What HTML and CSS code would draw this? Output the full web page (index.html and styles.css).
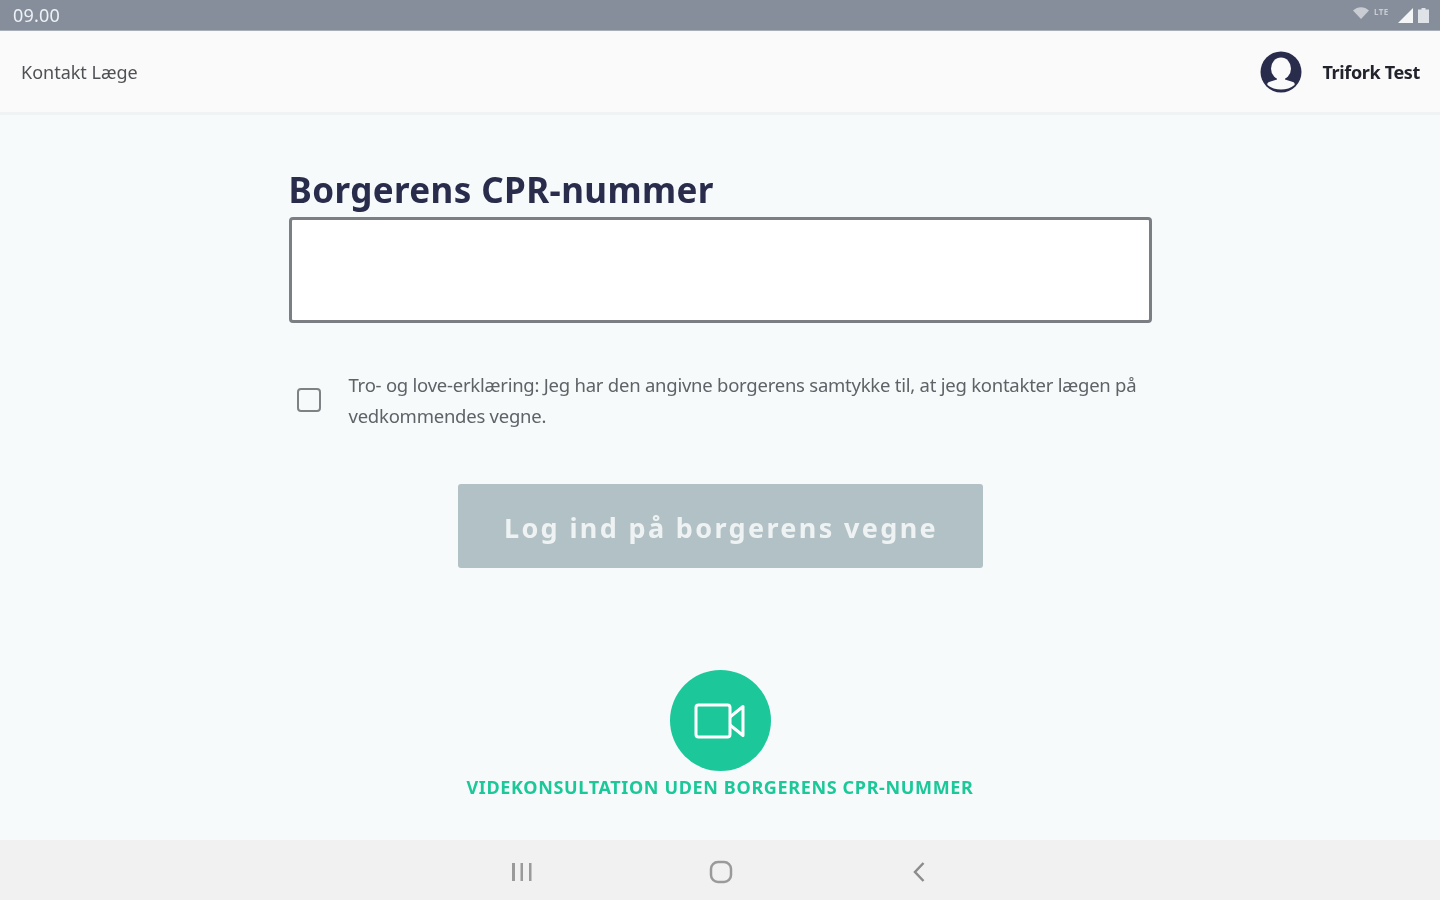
FILE: index.html
```html
<!DOCTYPE html>
<html lang="da">
<head>
<meta charset="utf-8">
<title>Kontakt Læge</title>
<link rel="stylesheet" href="styles.css">
</head>
<body>
<div class="app">
  <div class="statusbar">
    <span class="time">09.00</span>
    <div class="status-icons">
      <svg class="ic-wifi" width="16" height="12" viewBox="0 0 16 12"><path d="M0 3.500C4.500-1 11.500-1 16 3.500L8 12Z" fill="#c9cdd3"/></svg>
      <span class="lte">LTE</span>
      <svg class="ic-signal" width="15" height="15" viewBox="0 0 15 15"><path d="M15 0V15H0Z" fill="#f4f5f6"/></svg>
      <svg class="ic-battery" width="11" height="15" viewBox="0 0 11 15"><path d="M3.500 0h4v1.500H11V15H0V1.500h3.500Z" fill="#dfe2e6"/></svg>
    </div>
  </div>
  <header class="topbar">
    <span class="app-title">Kontakt Læge</span>
    <div class="user">
      <svg class="avatar" width="42" height="42" viewBox="0 0 42 42">
        <circle cx="21" cy="21" r="20.500" fill="#2a2c4c"/>
        <ellipse cx="21" cy="17.500" rx="10" ry="11" fill="#fafafa"/>
        <path d="M17 25h8v3.500l8 2.500c1.500.6 2 2 1.500 3C31 37 26 38.500 21 38.500S11 37 7.500 34c-.5-1 0-2.400 1.500-3l8-2.500Z" fill="#fafafa"/>
      </svg>
      <span class="user-name">Trifork Test</span>
    </div>
  </header>
  <main class="content">
    <section class="form">
      <h1 class="form-title">Borgerens CPR-nummer</h1>
      <input class="cpr-input" type="text" aria-label="Borgerens CPR-nummer">
      <label class="consent">
        <span class="checkbox"></span>
        <span class="consent-text">Tro- og love-erklæring: Jeg har den angivne borgerens samtykke til, at jeg kontakter lægen på vedkommendes vegne.</span>
      </label>
      <button class="login-btn" type="button"><span class="login-label">Log ind på borgerens vegne</span></button>
    </section>
    <div class="video">
      <div class="video-circle">
        <svg width="52" height="36" viewBox="0 0 52 36" fill="none" stroke="#fff" stroke-width="3" stroke-linejoin="round"><rect x="2" y="2" width="34" height="32" rx="2.500"/><path d="M36 14 49 3.500V32.500L36 22"/></svg>
      </div>
      <span class="video-label">VIDEKONSULTATION UDEN BORGERENS CPR-NUMMER</span>
    </div>
  </main>
  <nav class="navbar">
    <svg class="nav-icon" width="22" height="20" viewBox="0 0 22 20" fill="#9a9a9a"><rect x="1" y="1" width="3" height="18"/><rect x="9.500" y="1" width="2.500" height="18"/><rect x="18" y="1" width="2.500" height="18"/></svg>
    <svg class="nav-icon" width="24" height="24" viewBox="0 0 24 24" fill="none" stroke="#9a9a9a" stroke-width="2.500"><rect x="2" y="2" width="20" height="20" rx="7"/></svg>
    <svg class="nav-icon nav-back" width="14" height="22" viewBox="0 0 14 22" fill="none" stroke="#8c8c8c" stroke-width="2.500"><path d="M11.500 2 3 11l8.500 9"/></svg>
  </nav>
</div>
</body>
</html>
```

FILE: styles.css
```css
* { box-sizing: border-box; }
html, body { margin: 0; padding: 0; }
body {
  font-family: "Noto Sans", "Open Sans", sans-serif;
  background: #f6fafb;
}
.app {
  width: 1440px;
  height: 900px;
  display: flex;
  flex-direction: column;
  overflow: hidden;
}
.statusbar {
  height: 31px;
  flex: none;
  background: #868e9b;
  display: flex;
  align-items: center;
  justify-content: space-between;
  padding: 0 11px 0 13px;
  border-bottom: 1px solid #a9afb8;
}
.time {
  color: #eef1f5;
  font-size: 18px;
  letter-spacing: .2px;
  filter: blur(.7px);
}
.status-icons { display: flex; align-items: center; filter: blur(.7px); }
.ic-wifi { margin: 0 5px 5px 0; }
.lte { color: #c9cdd3; font-size: 8px; font-weight: 700; letter-spacing: .4px; width: 24px; margin-bottom: 8px; }
.ic-signal { margin-right: 5px; }
.topbar {
  height: 84px;
  flex: none;
  background: #fafafa;
  border-bottom: 3px solid #f0f3f4;
  display: flex;
  align-items: center;
  justify-content: space-between;
  padding: 0 20px 0 21px;
}
.app-title { color: #4f5155; font-size: 18px; filter: blur(.7px); }
.user { display: flex; align-items: center; gap: 20px; }
.avatar { filter: blur(.7px); }
.user-name { color: #22232c; font-size: 18px; font-weight: 700; letter-spacing: -.35px; filter: blur(.7px); }
.content {
  flex: 1;
  display: flex;
  flex-direction: column;
  align-items: center;
  padding-top: 50px;
}
.form { width: 863px; display: flex; flex-direction: column; }
.form-title {
  margin: 0 0 2px;
  color: #2a2c4c;
  font-size: 35px;
  line-height: 50px;
  font-weight: 700;
  letter-spacing: .4px;
  filter: blur(.7px);
}
.cpr-input {
  height: 106px;
  width: 100%;
  background: #fff;
  border: 3px solid #7b7e82;
  border-radius: 4px;
  outline: none;
  filter: blur(.6px);
}
.consent { display: flex; align-items: center; margin-top: 46px; padding-left: 8px; }
.checkbox {
  flex: none;
  width: 24px;
  height: 24px;
  border: 2.500px solid #7f8285;
  border-radius: 4px;
  margin-right: 28px;
  filter: blur(.7px);
}
.consent-text {
  color: #5f6266;
  font-size: 18.500px;
  line-height: 31px;
  letter-spacing: -.24px;
  filter: blur(.7px);
}
.login-btn {
  align-self: center;
  margin-top: 53px;
  width: 525px;
  height: 84px;
  padding: 2px 0 0 2px;
  border: 0;
  border-radius: 3px;
  background: #b2c1c5;
  color: #eef2f3;
  font-family: inherit;
  font-size: 27px;
  font-weight: 700;
  letter-spacing: 2.350px;
  filter: blur(.5px);
}
.login-label { display: block; filter: blur(.3px); }
.video {
  margin-top: 102px;
  display: flex;
  flex-direction: column;
  align-items: center;
}
.video-circle {
  width: 101px;
  height: 101px;
  margin-left: 1px;
  border-radius: 50%;
  background: #1cc899;
  display: flex;
  align-items: center;
  justify-content: center;
  filter: blur(.5px);
}
.video-label {
  color: #1cc899;
  font-size: 18px;
  line-height: 33px;
  font-weight: 700;
  letter-spacing: .65px;
  filter: blur(.7px);
}
.navbar {
  height: 60px;
  flex: none;
  background: #f1f1f1;
  display: flex;
  align-items: center;
  justify-content: center;
  gap: 176px;
  padding: 3px 3px 0 0;
}
.nav-icon { filter: blur(.7px); }
.nav-back { margin-left: 3px; }
```
